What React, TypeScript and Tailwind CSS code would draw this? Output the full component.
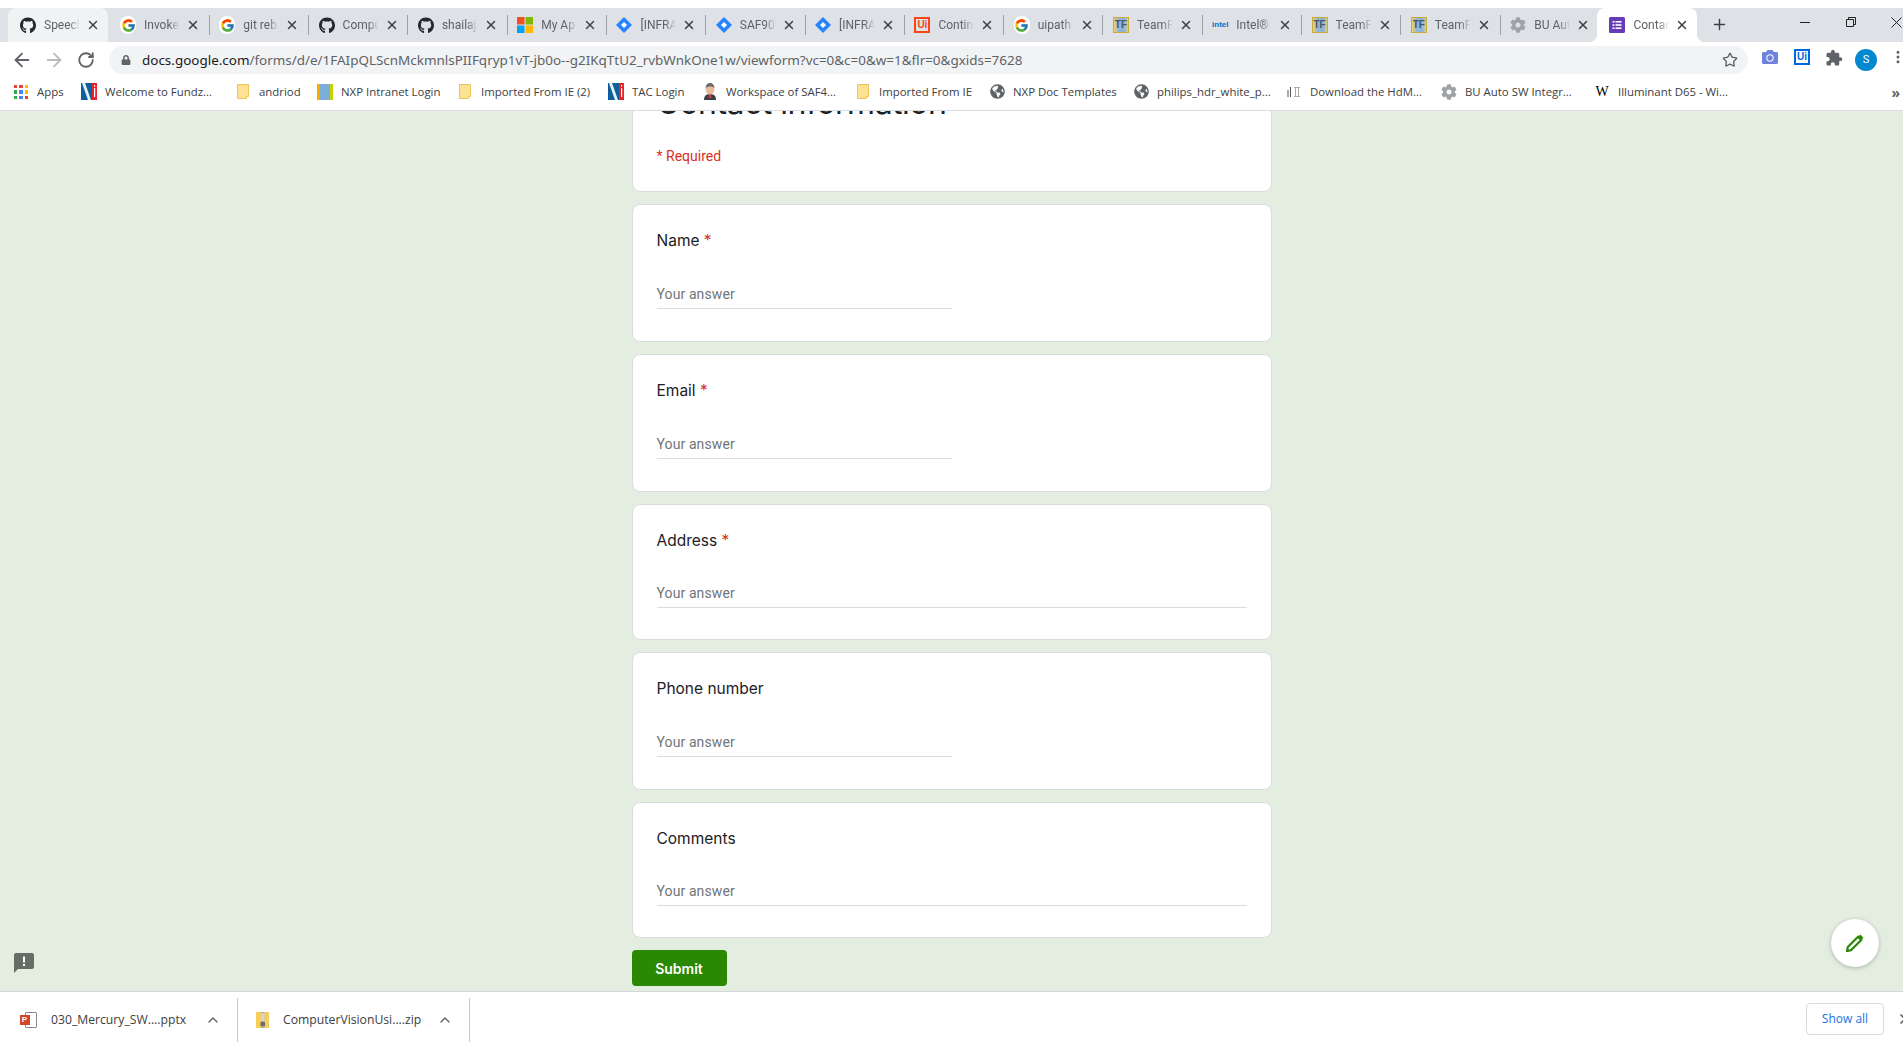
import type { ReactNode } from 'react';
import { ArrowLeft, ArrowRight, ChevronUp, EllipsisVertical, Plus, RotateCw, Star, X } from 'lucide-react';
import { FaCamera, FaCog, FaGithub, FaGlobeAmericas, FaLock } from 'react-icons/fa';
import { FcGoogle } from 'react-icons/fc';
import { MdExtension } from 'react-icons/md';

function GoogleIcon() {
    return (
        <span className="flex h-[18px] w-[18px] items-center justify-center rounded-full bg-white">
            <FcGoogle size={15} />
        </span>
    );
}

function MicrosoftIcon() {
    return (
        <svg width="16" height="16" viewBox="0 0 16 16">
            <rect width="7.5" height="7.5" fill="#f25022" />
            <rect x="8.5" width="7.5" height="7.5" fill="#7fba00" />
            <rect y="8.5" width="7.5" height="7.5" fill="#00a4ef" />
            <rect x="8.5" y="8.5" width="7.5" height="7.5" fill="#ffb900" />
        </svg>
    );
}

function JiraIcon() {
    return (
        <svg width="16" height="16" viewBox="0 0 16 16">
            <path d="M8 0l8 8-8 8-8-8z" fill="#2684ff" />
            <path d="M8 5l3 3-3 3-3-3z" fill="#fff" />
        </svg>
    );
}

function UiIcon({ color }: { color: string }) {
    return (
        <span
            className="flex h-4 w-4 items-center justify-center border-2 font-['Liberation_Sans',sans-serif] text-[10px] leading-none font-bold"
            style={{ borderColor: color, color }}
        >
            Ui
        </span>
    );
}

function TeamForgeIcon() {
    return (
        <span className="flex h-4 w-4 items-center justify-center border border-[#c9a93a] bg-[linear-gradient(to_right,#f3d36b,#8fb4d8_35%,#8fb4d8_75%,#d8d27a)] font-['Liberation_Sans',sans-serif] text-[10px] leading-none font-bold text-[#44586c]">
            TF
        </span>
    );
}

function IntelIcon() {
    return <span className="font-['Liberation_Sans',sans-serif] text-[8px] leading-none font-bold text-[#0071c5]">intel</span>;
}

function GearIcon() {
    return <FaCog size={16} className="text-[#9ea3a6]" />;
}

function FormsIcon() {
    return (
        <svg width="16" height="16" viewBox="0 0 16 16">
            <rect width="16" height="16" rx="1.5" fill="#673ab7" />
            <rect x="3.5" y="4" width="2" height="1.6" fill="#fff" />
            <rect x="6.5" y="4" width="6" height="1.6" fill="#fff" />
            <rect x="3.5" y="7.2" width="2" height="1.6" fill="#fff" />
            <rect x="6.5" y="7.2" width="6" height="1.6" fill="#fff" />
            <rect x="3.5" y="10.4" width="2" height="1.6" fill="#fff" />
            <rect x="6.5" y="10.4" width="6" height="1.6" fill="#fff" />
        </svg>
    );
}

function AppsIcon() {
    const colors = ['#ea4335', '#ea4335', '#fbbc04', '#34a853', '#4285f4', '#fbbc04', '#34a853', '#4285f4', '#ea4335'];
    return (
        <span className="grid h-3.5 w-3.5 grid-cols-3 gap-[2px]">
            {colors.map((color, i) => (
                <span key={i} style={{ backgroundColor: color }} />
            ))}
        </span>
    );
}

function FundzIcon() {
    return (
        <svg width="16" height="17" viewBox="0 0 16 17">
            <rect width="11" height="17" fill="#0f5f9c" />
            <path d="M1 0h3l6 17H7z" fill="#e8f0f6" />
            <rect x="11" width="5" height="17" fill="#e8232a" />
            <rect x="13" y="2" width="1.2" height="1.6" fill="#fff" />
            <rect x="13" y="5" width="1.2" height="9" fill="#fff" />
        </svg>
    );
}

function FolderIcon() {
    return (
        <svg width="12" height="15" viewBox="0 0 12 15">
            <path d="M.5.5h11v12H9.5v2h-9z" fill="#fde293" stroke="#ecc558" />
        </svg>
    );
}

function IntranetIcon() {
    return (
        <svg width="16" height="16" viewBox="0 0 16 16">
            <rect width="3" height="16" fill="#f5ab00" />
            <rect x="3" width="10" height="16" fill="#7aaed6" />
            <rect x="13" width="3" height="16" fill="#c9d200" />
        </svg>
    );
}

function JenkinsIcon() {
    return (
        <svg width="16" height="17" viewBox="0 0 16 17">
            <path d="M2 17c0-4 2-6 6-6s6 2 6 6z" fill="#3a3f4a" />
            <path d="M7 11h2l.6 4H6.4z" fill="#d33833" />
            <ellipse cx="8" cy="6" rx="4.5" ry="5.5" fill="#e8bd9c" />
            <path d="M3.5 5C4 1 6 0 8 0s4 1 4.500 5C10 3 6 3 3.500 5z" fill="#6d6b6d" />
        </svg>
    );
}

function GlobeIcon() {
    return <FaGlobeAmericas size={15} className="text-[#5f6368]" />;
}

function DownloadIcon() {
    return (
        <svg width="14" height="10" viewBox="0 0 14 10">
            <rect x="0.5" y="3" width="1" height="7" fill="#555" />
            <rect x="3" width="1" height="10" fill="#555" />
            <path d="M7 .5h6M7 9.500h6M8.500 .5v9M11.500 .5v9" stroke="#aaa" fill="none" />
        </svg>
    );
}

function WikipediaIcon() {
    return <span className="font-['Liberation_Serif',serif] text-[14px] leading-none text-black">W</span>;
}

function PptxIcon() {
    return (
        <span className="relative flex h-4 w-[17px] justify-end">
            <span className="h-4 w-3 rounded-[1px] border border-[#8a8a8a] bg-white" />
            <span className="absolute top-[3px] left-0 flex h-[10px] w-[10px] items-center justify-center bg-[#d24726] font-['Liberation_Sans',sans-serif] text-[8px] leading-none font-bold text-white">
                P
            </span>
        </span>
    );
}

function ZipIcon() {
    return (
        <svg width="13" height="16" viewBox="0 0 13 16">
            <rect width="13" height="16" fill="#f6ce5b" />
            <rect x="5" width="3.500" height="16" fill="#a9a9a0" />
            <path d="M5 2h3.500M5 4h3.500M5 6h3.500M5 8h3.500" stroke="#fff" />
            <rect x="4.500" y="10" width="4.500" height="4" fill="#6f6f6a" />
        </svg>
    );
}

const github = <FaGithub size={17} className="text-[#24292e]" />;

const tabs: { title: string; icon: ReactNode; tone?: 'hover' | 'active' }[] = [
    { title: 'Speech', icon: github, tone: 'hover' },
    { title: 'Invoke', icon: <GoogleIcon /> },
    { title: 'git reb', icon: <GoogleIcon /> },
    { title: 'Compu', icon: github },
    { title: 'shailaja', icon: github },
    { title: 'My Ap', icon: <MicrosoftIcon /> },
    { title: '[INFRA', icon: <JiraIcon /> },
    { title: 'SAF90(', icon: <JiraIcon /> },
    { title: '[INFRA', icon: <JiraIcon /> },
    { title: 'Contin', icon: <UiIcon color="#fa4616" /> },
    { title: 'uipath', icon: <GoogleIcon /> },
    { title: 'TeamF', icon: <TeamForgeIcon /> },
    { title: 'Intel®', icon: <IntelIcon /> },
    { title: 'TeamF', icon: <TeamForgeIcon /> },
    { title: 'TeamF', icon: <TeamForgeIcon /> },
    { title: 'BU Aut', icon: <GearIcon /> },
    { title: 'Contac', icon: <FormsIcon />, tone: 'active' },
];

const bookmarks: { label: string; icon: ReactNode; width: string }[] = [
    { label: 'Apps', icon: <AppsIcon />, width: 'w-[68px]' },
    { label: 'Welcome to Fundz...', icon: <FundzIcon />, width: 'w-[154px]' },
    { label: 'andriod', icon: <FolderIcon />, width: 'w-[82px]' },
    { label: 'NXP Intranet Login', icon: <IntranetIcon />, width: 'w-[140px]' },
    { label: 'Imported From IE (2)', icon: <FolderIcon />, width: 'w-[151px]' },
    { label: 'TAC Login', icon: <FundzIcon />, width: 'w-[94px]' },
    { label: 'Workspace of SAF4...', icon: <JenkinsIcon />, width: 'w-[153px]' },
    { label: 'Imported From IE', icon: <FolderIcon />, width: 'w-[134px]' },
    { label: 'NXP Doc Templates', icon: <GlobeIcon />, width: 'w-[144px]' },
    { label: 'philips_hdr_white_p...', icon: <GlobeIcon />, width: 'w-[153px]' },
    { label: 'Download the HdM...', icon: <DownloadIcon />, width: 'w-[155px]' },
    { label: 'BU Auto SW Integr...', icon: <GearIcon />, width: 'w-[153px]' },
    { label: 'Illuminant D65 - Wi...', icon: <WikipediaIcon />, width: 'w-[146px]' },
];

const questions = [
    { label: 'Name', required: true, long: false },
    { label: 'Email', required: true, long: false },
    { label: 'Address', required: true, long: true },
    { label: 'Phone number', required: false, long: false },
    { label: 'Comments', required: false, long: true },
];

function Tab({ title, icon, tone, separator, width }: { title: string; icon: ReactNode; tone?: 'hover' | 'active'; separator: boolean; width: string }) {
    const background = tone === 'active' ? 'bg-white' : tone === 'hover' ? 'bg-[#f1f2f4]' : '';

    return (
        <div className={`relative flex h-[34px] shrink-0 items-center rounded-t-lg pl-[1.5px] ${width} ${background}`}>
            <span className={`h-5 w-px ${separator ? 'bg-[#9aa0a6]' : ''}`} />
            <span className="ml-[9.5px] flex h-4 w-4 shrink-0 items-center justify-center">{icon}</span>
            <span className="ml-2 w-9 overflow-hidden text-[12px] whitespace-nowrap text-[#5f6368] [mask-image:linear-gradient(to_right,black_70%,transparent)]">
                {title}
            </span>
            <X size={14} strokeWidth={2.5} className="ml-1.5 shrink-0 text-[#3c4043]" />
            {tone === 'active' && (
                <>
                    <span className="absolute bottom-0 -left-2 h-2 w-2 bg-[radial-gradient(circle_at_0_0,transparent_8px,white_8.5px)]" />
                    <span className="absolute -right-2 bottom-0 h-2 w-2 bg-[radial-gradient(circle_at_100%_0,transparent_8px,white_8.5px)]" />
                </>
            )}
        </div>
    );
}

function TabStrip() {
    return (
        <div className="flex h-[34px] bg-[#dee1e6] pl-2">
            {tabs.map((tab, i) => (
                <Tab key={i} {...tab} separator={i > 1 && i < 16} width={i === 0 ? 'w-[100px]' : 'w-[99.3px]'} />
            ))}
            <Plus size={17} strokeWidth={2} className="mt-2 ml-[14px] shrink-0 text-[#3c4043]" />
            <div className="ml-[54px] flex shrink-0 text-[#222]">
                <span className="flex h-7 w-[46px] items-center justify-center">
                    <span className="h-px w-[10px] bg-[#222]" />
                </span>
                <span className="flex h-7 w-[46px] items-center justify-center">
                    <svg width="10" height="10" viewBox="0 0 10 10" fill="none" stroke="currentColor">
                        <path d="M.5 2.500h7v7h-7zM2.500 2.500v-2h7v7h-2" />
                    </svg>
                </span>
                <span className="flex h-7 w-[46px] items-center justify-center">
                    <svg width="11" height="11" viewBox="0 0 11 11" fill="none" stroke="currentColor">
                        <path d="M.5.5l10 10M10.500.5l-10 10" />
                    </svg>
                </span>
            </div>
        </div>
    );
}

function Toolbar() {
    return (
        <div className="flex h-9 items-center bg-white pl-[5.5px]">
            <span className="flex w-8 shrink-0 justify-center text-[#5f6368]">
                <ArrowLeft size={22} strokeWidth={2} />
            </span>
            <span className="flex w-8 shrink-0 justify-center text-[#babcbe]">
                <ArrowRight size={22} strokeWidth={2} />
            </span>
            <span className="flex w-8 shrink-0 justify-center text-[#5f6368]">
                <RotateCw size={18} strokeWidth={2.4} />
            </span>
            <div className="ml-[7.5px] flex h-7 w-[1639px] shrink-0 items-center rounded-full bg-[#f1f3f4] pr-[10px] pl-[12px]">
                <FaLock size={10} className="shrink-0 text-[#5f6368]" />
                <span className="ml-[11px] font-['Noto_Sans',sans-serif] text-[13.45px] whitespace-nowrap text-[#5f6368]">
                    <span className="text-[#202124]">docs.google.com</span>
                    /forms/d/e/1FAIpQLScnMckmnlsPIIFqryp1vT-jb0o--g2IKqTtU2_rvbWnkOne1w/viewform?vc=0&amp;c=0&amp;w=1&amp;flr=0&amp;gxids=7628
                </span>
                <Star size={16} strokeWidth={2} className="ml-auto text-[#5f6368]" />
            </div>
            <div className="ml-1.5 flex shrink-0">
                <span className="flex w-8 justify-center">
                    <FaCamera size={16} className="text-[#6f83dd]" />
                </span>
                <span className="flex w-8 justify-center">
                    <UiIcon color="#0067df" />
                </span>
                <span className="flex w-8 justify-center">
                    <MdExtension size={18} className="text-[#5f6368]" />
                </span>
                <span className="flex w-8 justify-center">
                    <span className="flex h-[22px] w-[22px] items-center justify-center rounded-full bg-[#0288d1] text-[11px] text-white">S</span>
                </span>
                <span className="flex w-8 justify-center text-[#5f6368]">
                    <EllipsisVertical size={16} strokeWidth={2.5} />
                </span>
            </div>
        </div>
    );
}

function BookmarkBar() {
    return (
        <div className="flex h-[33px] items-center border-b border-[#dadce0] bg-white pb-1 pl-[13px] font-['Open_Sans',sans-serif] text-[11.4px] text-[#3c4043]">
            {bookmarks.map((bookmark, i) => (
                <div key={i} className={`flex shrink-0 items-center gap-2 whitespace-nowrap ${bookmark.width}`}>
                    <span className="flex h-4 w-4 shrink-0 items-center justify-center">{bookmark.icon}</span>
                    {bookmark.label}
                </div>
            ))}
            <span className="ml-auto pr-[3px] text-[14px] font-bold text-[#5f6368]">»</span>
        </div>
    );
}

function QuestionCard({ label, required, long }: { label: string; required: boolean; long: boolean }) {
    return (
        <section className={`rounded-lg border border-[#dadce0] bg-white px-6 pt-[23.5px] ${long ? 'h-[136px]' : 'h-[138px]'}`}>
            <div className="font-['Inter',sans-serif] text-[15.5px] leading-6 text-[#202124]">
                {label}
                {required && <span className="text-[#d93025]"> *</span>}
            </div>
            <div
                className={`h-[25px] border-b border-[#dadce0] font-['Roboto',sans-serif] text-[14px] leading-5 tracking-[0.1px] text-[#70757a] ${long ? 'mt-[30.5px] w-[590px]' : 'mt-[31.5px] w-[295px]'}`}
            >
                Your answer
            </div>
        </section>
    );
}

function Form() {
    return (
        <div className="mx-auto -mt-[60px] flex w-[640px] flex-col gap-3">
            <section className="h-[141px] rounded-lg border border-[#dadce0] bg-white px-6 pt-[31px]">
                <h1 className="font-['Inter',sans-serif] text-[32px] leading-10 tracking-[-0.5px] text-[#202124]">Contact information</h1>
                <p className="mt-[23px] font-['Roboto',sans-serif] text-[14px] leading-5 text-[#d93025]">* Required</p>
            </section>
            {questions.map((question) => (
                <QuestionCard key={question.label} {...question} />
            ))}
            <button className="flex h-9 w-[95px] items-center justify-center rounded bg-[#2a8804] font-['Inter',sans-serif] text-[14px] font-semibold text-white">
                Submit
            </button>
        </div>
    );
}

function DownloadItem({ icon, name, className, nameClassName }: { icon: ReactNode; name: string; className: string; nameClassName: string }) {
    return (
        <div className={`flex h-11 shrink-0 items-center border-r border-[#c8c8c8] ${className}`}>
            <span className="flex w-[18px] shrink-0 justify-center">{icon}</span>
            <span className={`w-[140px] font-['Open_Sans',sans-serif] text-[12.2px] whitespace-nowrap text-[#3c4043] ${nameClassName}`}>{name}</span>
            <ChevronUp size={16} strokeWidth={2} className="ml-[14px] shrink-0 text-[#5f6368]" />
        </div>
    );
}

function DownloadShelf() {
    return (
        <div className="flex h-[65px] shrink-0 items-start overflow-hidden border-t border-[#d4d6d8] bg-white pt-[6px]">
            <DownloadItem icon={<PptxIcon />} name="030_Mercury_SW....pptx" className="w-[238px] pl-[19px]" nameClassName="ml-[14px]" />
            <DownloadItem icon={<ZipIcon />} name="ComputerVisionUsi....zip" className="w-[232px] pl-[15px]" nameClassName="ml-3" />
            <button className="mt-[5px] ml-auto h-8 w-[78px] shrink-0 rounded border border-[#dadce0] bg-white font-['Open_Sans',sans-serif] text-[12px] text-[#1a73e8]">
                Show all
            </button>
            <X size={16} strokeWidth={2.5} className="mt-[13px] -mr-[10px] ml-[13px] shrink-0 text-[#5f6368]" />
        </div>
    );
}

export default function App() {
    return (
        <div className="flex h-screen w-full flex-col overflow-hidden bg-white pt-2 font-['Roboto',sans-serif]">
            <TabStrip />
            <Toolbar />
            <BookmarkBar />
            <main className="relative min-h-0 flex-1 overflow-hidden bg-[#e3eee1]">
                <Form />
                {/* Report button and edit button float over the page */}
                <svg className="absolute top-[842px] left-[14px]" width="20" height="20" viewBox="0 0 20 20">
                    <path d="M2 0h16a2 2 0 012 2v12a2 2 0 01-2 2H4l-4 4V2a2 2 0 012-2z" fill="#666c66" />
                    <rect x="9" y="3.500" width="2" height="6" fill="#fff" />
                    <rect x="9" y="11" width="2" height="2" fill="#fff" />
                </svg>
                <div className="absolute top-[808px] left-[1831px] flex h-12 w-12 items-center justify-center rounded-full bg-white shadow-[0_1px_4px_rgba(0,0,0,0.25)]">
                    <svg width="18" height="18" viewBox="0 0 18 18" fill="none">
                        <path d="M1 17l.8-4L12 2.800l3.200 3.200L5 16.200z" stroke="#2a8804" strokeWidth="2.200" />
                        <path d="M12.500 2.300l1.800-1.800 3.200 3.200-1.800 1.800z" fill="#2a8804" />
                    </svg>
                </div>
            </main>
            <DownloadShelf />
        </div>
    );
}
